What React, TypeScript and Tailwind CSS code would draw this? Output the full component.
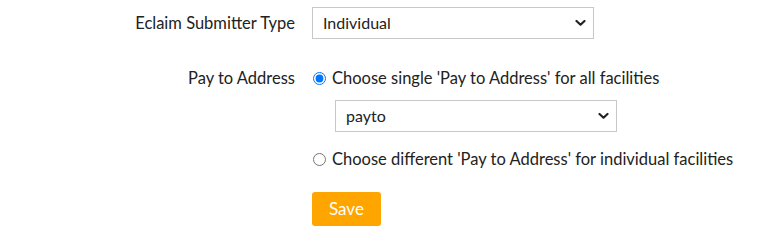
import { useState } from 'react';

function Chevron() {
  return (
    <svg className="pointer-events-none absolute right-[8px] top-1/2 -translate-y-1/2" width="11" height="7" viewBox="0 0 11 7" fill="none">
      <path d="M1.5 1.5L5.5 5.2L9.5 1.5" stroke="#222" strokeWidth="2.2" strokeLinecap="round" strokeLinejoin="round" />
    </svg>
  );
}

function SelectBox({ value, options, onChange }: { value: string; options: string[]; onChange: (v: string) => void }) {
  return (
    <div className="relative h-[32px] w-[282px]">
      <select
        value={value}
        onChange={(e) => onChange(e.target.value)}
        className="h-full w-full appearance-none border border-[#c8c8c8] bg-white pl-[10px] pr-[28px] text-[16px] text-[#222] outline-none"
      >
        {options.map((o) => (
          <option key={o} value={o}>{o}</option>
        ))}
      </select>
      <Chevron />
    </div>
  );
}

export default function App() {
  const [submitterType, setSubmitterType] = useState('Individual');
  const [payto, setPayto] = useState('payto');
  const [mode, setMode] = useState<'single' | 'different'>('single');

  return (
    <div className="min-h-screen bg-white font-['Lato',sans-serif] text-[16.5px] text-[#222]">
      <div className="grid grid-cols-[295px_1fr] gap-x-[17px] pt-[7px]">
        <label className="flex h-[32px] items-center justify-end">Eclaim Submitter Type</label>
        <SelectBox value={submitterType} options={['Individual', 'Group']} onChange={setSubmitterType} />

        <label className="mt-[23px] flex h-[32px] items-center justify-end">Pay to Address</label>
        <div className="mt-[23px] flex flex-col">
          <label className="flex h-[32px] items-center gap-[7px]">
            <input
              type="radio"
              name="payto"
              checked={mode === 'single'}
              onChange={() => setMode('single')}
              className="m-0 h-[13px] w-[13px] translate-x-[1px]"
            />
            <span>Choose single 'Pay to Address' for all facilities</span>
          </label>
          <div className="ml-[23px] mt-[6px]">
            <SelectBox value={payto} options={['payto']} onChange={setPayto} />
          </div>
          <label className="mt-[11px] flex h-[32px] items-center gap-[7px]">
            <input
              type="radio"
              name="payto"
              checked={mode === 'different'}
              onChange={() => setMode('different')}
              className="m-0 h-[13px] w-[13px] translate-x-[1px]"
            />
            <span>Choose different 'Pay to Address' for individual facilities</span>
          </label>
          <div className="mt-[17px]">
            <button className="h-[34px] rounded-[3px] bg-[#ffa500] px-[17px] text-[17px] text-white">Save</button>
          </div>
        </div>
      </div>
    </div>
  );
}
